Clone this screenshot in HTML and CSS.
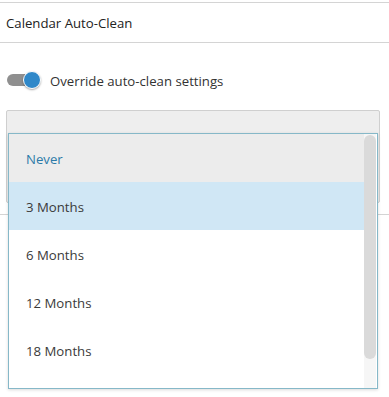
FILE: index.html
```html
<!DOCTYPE html>
<html>
<head>
<meta charset="utf-8">
<link rel="stylesheet" href="styles.css">
</head>
<body>
<div class="page">
  <div class="header">Calendar Auto-Clean</div>
  <div class="toggle-row">
    <span class="toggle"><span class="track"></span><span class="knob"></span></span>
    <span class="toggle-label">Override auto-clean settings</span>
  </div>
  <div class="select-box"></div>
  <div class="divider"></div>
  <div class="dropdown">
    <ul class="list">
      <li class="item hover">Never</li>
      <li class="item selected">3 Months</li>
      <li class="item">6 Months</li>
      <li class="item">12 Months</li>
      <li class="item">18 Months</li>
    </ul>
    <div class="scrollbar"><div class="thumb"></div></div>
  </div>
</div>
</body>
</html>
```
FILE: styles.css
```css
html, body {
  margin: 0;
  padding: 0;
  background: #fff;
}
body {
  font-family: "Open Sans", "Noto Sans", sans-serif;
  font-size: 13.2px;
  color: #333;
}
.page {
  position: relative;
  width: 389px;
  height: 397px;
  overflow: hidden;
  padding-top: 2px;
  box-sizing: border-box;
}
.header {
  border-top: 1px solid #d4d4d4;
  border-bottom: 1px solid #d4d4d4;
  height: 39px;
  box-sizing: content-box;
  padding-top: 0;
  line-height: 41px;
  padding-left: 6px;
  color: #222;
}
.toggle-row {
  display: flex;
  align-items: center;
  height: 18px;
  margin-top: 28px;
  padding-left: 7px;
}
.toggle {
  position: relative;
  width: 34px;
  height: 18px;
  margin-right: 9px;
}
.track {
  position: absolute;
  left: 0;
  top: 3px;
  width: 28px;
  height: 12px;
  border-radius: 6px;
  background: #8f8f8f;
}
.knob {
  position: absolute;
  left: 16px;
  top: 0;
  width: 16px;
  height: 16px;
  border-radius: 50%;
  background: #2f88c9;
  border: 1px solid #fff;
  box-shadow: 0 1px 2px rgba(0,0,0,0.35);
}
.toggle-label {
  color: #333;
  padding-top: 1px;
}
.select-box {
  margin: 21px 9px 0 6px;
  height: 91px;
  background: #eeeeee;
  border: 1px solid #cfcfcf;
  border-radius: 2px;
}
.divider {
  margin-top: 11px;
  border-top: 1px solid #d4d4d4;
}
.dropdown {
  position: absolute;
  left: 8px;
  top: 133px;
  width: 368px;
  height: 254px;
  border: 1px solid #86b8c8;
  background: #fff;
  box-shadow: 0 1px 3px rgba(0,0,0,0.15);
  overflow: hidden;
  display: flex;
}
.list {
  list-style: none;
  margin: 0;
  padding: 0;
  flex: 1;
}
.item {
  height: 48px;
  box-sizing: border-box;
  padding-top: 3px;
  line-height: 45px;
  padding-left: 17px;
  color: #3a3a3a;
}
.item.hover {
  background: #ececec;
  color: #2b7aa8;
}
.item.selected {
  background: #d0e7f5;
}
.scrollbar {
  width: 12px;
  background: #f6f6f6;
  margin-right: 1px;
}
.thumb {
  height: 224px;
  background: #dadada;
  border-radius: 6px;
  margin-top: 1px;
}
```
